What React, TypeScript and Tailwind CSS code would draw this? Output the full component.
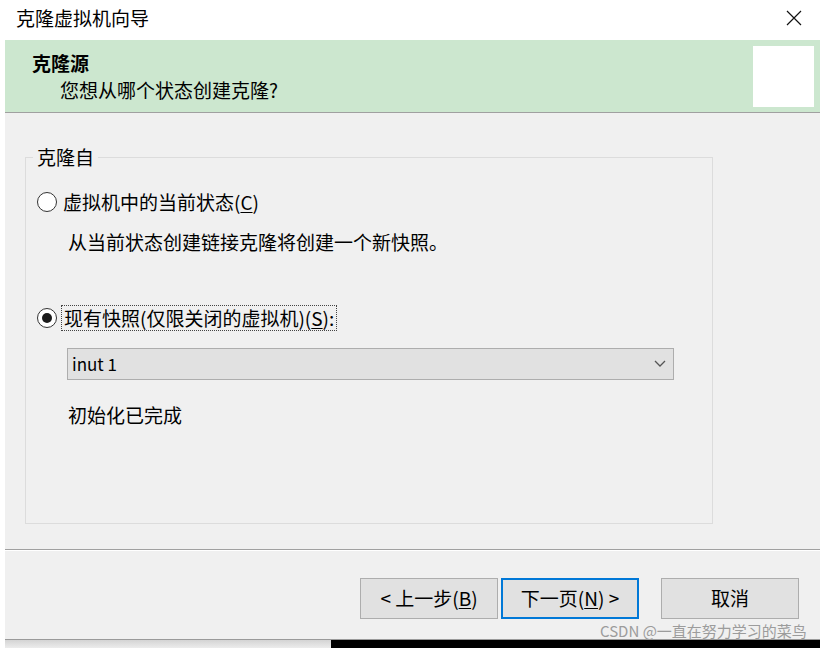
const font = "font-['Microsoft_YaHei','Noto_Sans_CJK_SC',sans-serif]"

const Radio = ({ checked }: { checked?: boolean }) => (
  <span className="w-[20px] h-[20px] rounded-full border border-[#333] bg-white flex items-center justify-center shrink-0">
    {checked && <span className="w-[10px] h-[10px] rounded-full bg-[#1a1a1a]" />}
  </span>
)

const App = () => {
  return (
    <div className={`w-[820px] h-[648px] bg-white relative overflow-hidden text-black ${font}`}>
      {/* title bar */}
      <div className="h-[40px] flex items-center justify-between pl-[16px] pr-[18px] pb-[5px]">
        <span className="text-[19px] leading-[24px]">克隆虚拟机向导</span>
        <svg width="16" height="16" viewBox="0 0 16 16" className="text-[#111]">
          <path d="M1 1 L15 15 M15 1 L1 15" stroke="currentColor" strokeWidth="1.2" fill="none" />
        </svg>
      </div>

      <div className="ml-[5px] flex flex-col">
        {/* header */}
        <div className="h-[73px] bg-[#cce7cf] border-b border-[#a0a0a0] flex justify-between">
          <div className="pt-[11px] pl-[27px]">
            <div className="text-[19px] leading-[24px] font-bold">克隆源</div>
            <div className="text-[19px] leading-[24px] mt-[3px] pl-[28px]">您想从哪个状态创建克隆?</div>
          </div>
          <div className="w-[61px] h-[61px] bg-white mt-[6px] mr-[6px]" />
        </div>

        {/* content */}
        <div className="h-[436px] bg-[#f0f0f0] pt-[44px] pl-[20px]">
          <div className="w-[688px] h-[367px] border border-[#dcdcdc] text-[19px] leading-[24px]">
            <div className="w-fit -mt-[13px] ml-[7px] px-[4px] bg-[#f0f0f0]">克隆自</div>

            <div className="mt-[21px] pl-[11px] flex items-center gap-[6px]">
              <Radio />
              <span>
                虚拟机中的当前状态(<span className="underline underline-offset-2">C</span>)
              </span>
            </div>

            <div className="mt-[16px] pl-[42px]">从当前状态创建链接克隆将创建一个新快照。</div>

            <div className="mt-[51px] pl-[11px] flex items-center gap-[4px]">
              <Radio checked />
              <span className="border border-dotted border-[#444] px-[2px]">
                现有快照(仅限关闭的虚拟机)(<span className="underline underline-offset-2">S</span>):
              </span>
            </div>

            <div className="mt-[17px] ml-[41px] w-[607px] h-[32px] bg-[#e1e1e1] border border-[#adadad] flex items-center justify-between pl-[4px] pr-[7px]">
              <span className="text-[17px]">inut 1</span>
              <svg width="12" height="8" viewBox="0 0 12 8">
                <path d="M1 1 L6 6 L11 1" stroke="#555" strokeWidth="1.3" fill="none" />
              </svg>
            </div>

            <div className="mt-[23px] pl-[42px]">初始化已完成</div>
          </div>
        </div>

        {/* separator */}
        <div className="h-px bg-[#a0a0a0]" />
        <div className="h-px bg-white" />

        {/* footer */}
        <div className="h-[88px] bg-[#f0f0f0] flex justify-end pt-[27px] pr-[21px] text-[19px]">
          <div className="flex h-[41px]">
            <button className="w-[138px] h-full bg-[#e1e1e1] border border-[#adadad]">
              &lt; 上一步(<span className="underline underline-offset-2">B</span>)
            </button>
            <button className="w-[138px] h-full ml-[3px] bg-[#e1e1e1] border-2 border-[#0078d7]">
              下一页(<span className="underline underline-offset-2">N</span>) &gt;
            </button>
            <button className="w-[138px] h-full ml-[22px] bg-[#e1e1e1] border border-[#adadad]">取消</button>
          </div>
        </div>

        <div className="h-px bg-[#9a9a9a]" />
        <div className="h-[8px] flex">
          <div className="w-[326px] bg-gradient-to-b from-[#d4d4d4] to-[#ececec]" />
          <div className="flex-1 bg-black" />
        </div>
      </div>

      <span className="absolute left-[600px] top-[621px] text-[15px] leading-[19px] text-[#9c9c9c]">
        CSDN @一直在努力学习的菜鸟
      </span>
    </div>
  )
}

export default App
